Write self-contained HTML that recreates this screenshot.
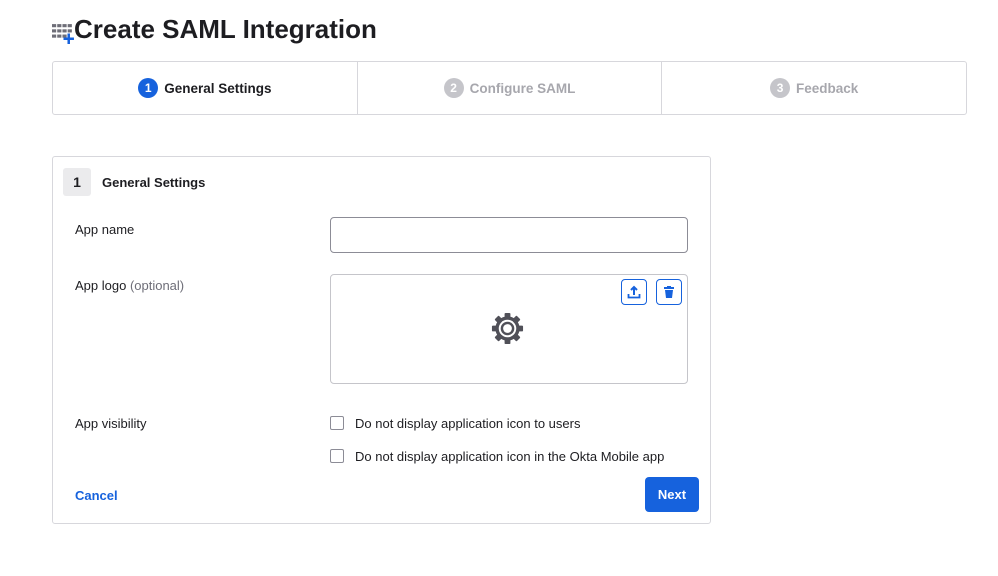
<!DOCTYPE html>
<html><head><meta charset="utf-8"><style>
*{box-sizing:border-box;margin:0;padding:0}
body{width:998px;height:576px;background:#fff;font-family:"Liberation Sans",sans-serif;color:#1d1d21;position:relative;overflow:hidden}
.abs{position:absolute}
h1{position:absolute;left:74px;top:14px;font-size:26px;font-weight:bold;color:#1d1d21;letter-spacing:0}
.steps{left:52px;top:61px;width:915px;height:54px;border:1px solid #d7d7dc;border-radius:3px;display:flex}
.step{flex:1;display:flex;align-items:center;justify-content:center;font-size:13.5px;font-weight:bold;color:#a7a7ad;border-right:1px solid #d7d7dc}
.step:last-child{border-right:none}
.num{width:20px;height:20px;border-radius:50%;background:#c5c5ca;color:#fff;font-size:12px;display:flex;align-items:center;justify-content:center;margin-right:6px}
.step.on{color:#1d1d21}.step.on .num{background:#1662dd}
.card{left:52px;top:156px;width:659px;height:368px;border:1px solid #d7d7dc;border-radius:3px}
.badge{left:63px;top:168px;width:28px;height:28px;background:#ebebed;border-radius:3px;font-size:14px;font-weight:bold;display:flex;align-items:center;justify-content:center}
.lbl{font-size:13px;color:#1d1d21}
.input{border:1px solid #8c8c96;border-radius:4px}
.cb{width:14px;height:14px;border:1px solid #8c8c96;border-radius:2px}
.ib{width:26px;height:26px;border:1px solid #1662dd;border-radius:4px;display:flex;align-items:center;justify-content:center}
</style></head><body>
<svg class="abs" style="left:52px;top:22px" width="23" height="23" viewBox="0 0 22 22">
<g fill="#6e6e78"><rect x="0" y="2" width="4" height="3"/><rect x="5" y="2" width="4" height="3"/><rect x="10" y="2" width="4" height="3"/><rect x="15" y="2" width="4" height="3"/>
<rect x="0" y="7" width="4" height="3"/><rect x="5" y="7" width="4" height="3"/><rect x="10" y="7" width="4" height="3"/><rect x="15" y="7" width="4" height="3"/>
<rect x="0" y="12" width="4" height="3"/><rect x="5" y="12" width="4" height="3"/><rect x="10" y="12" width="4" height="3"/></g>
<path d="M16 11v10M11 16h10" stroke="#1662dd" stroke-width="2.4"/></svg>
<h1>Create SAML Integration</h1>
<div class="abs steps">
<div class="step on"><span class="num">1</span>General Settings</div>
<div class="step"><span class="num">2</span>Configure SAML</div>
<div class="step"><span class="num">3</span>Feedback</div>
</div>
<div class="abs card"></div>
<div class="abs badge">1</div>
<div class="abs" style="left:102px;top:175px;font-size:13px;font-weight:bold">General Settings</div>
<div class="abs lbl" style="left:75px;top:222px">App name</div>
<div class="abs input" style="left:330px;top:217px;width:358px;height:36px"></div>
<div class="abs lbl" style="left:75px;top:278px">App logo <span style="color:#6e6e78">(optional)</span></div>
<div class="abs input" style="left:330px;top:274px;width:358px;height:110px;border-color:#c5c5ca"></div>
<div class="abs ib" style="left:621px;top:279px"><svg width="14" height="14" viewBox="0 0 14 14"><path d="M7 10V2M4 5l3-3 3 3" stroke="#1662dd" stroke-width="2" fill="none"/><path d="M1.5 9v3.5h11V9" stroke="#1662dd" stroke-width="1.8" fill="none"/></svg></div>
<div class="abs ib" style="left:656px;top:279px"><svg width="14" height="14" viewBox="0 0 14 14"><rect x="2" y="2" width="10" height="2" fill="#1662dd"/><rect x="5" y="1" width="4" height="2" fill="#1662dd"/><path d="M3 5h8l-1 8H4z" fill="#1662dd"/></svg></div>
<svg class="abs" style="left:490px;top:311px" width="35" height="35" viewBox="0 0 36 36"><g fill="#505058" transform="translate(18 18)">
<rect x="-3" y="-16" width="6" height="6" rx="1"/><rect x="-3" y="-16" width="6" height="6" rx="1" transform="rotate(45)"/><rect x="-3" y="-16" width="6" height="6" rx="1" transform="rotate(90)"/><rect x="-3" y="-16" width="6" height="6" rx="1" transform="rotate(135)"/><rect x="-3" y="-16" width="6" height="6" rx="1" transform="rotate(180)"/><rect x="-3" y="-16" width="6" height="6" rx="1" transform="rotate(225)"/><rect x="-3" y="-16" width="6" height="6" rx="1" transform="rotate(270)"/><rect x="-3" y="-16" width="6" height="6" rx="1" transform="rotate(315)"/>
<circle r="12.5"/></g><circle cx="18" cy="18" r="9" fill="#fff"/><circle cx="18" cy="18" r="7" fill="#505058"/><circle cx="18" cy="18" r="4.5" fill="#fff"/></svg>
<div class="abs lbl" style="left:75px;top:416px">App visibility</div>
<div class="abs cb" style="left:330px;top:416px"></div>
<div class="abs lbl" style="left:355px;top:416px">Do not display application icon to users</div>
<div class="abs cb" style="left:330px;top:449px"></div>
<div class="abs lbl" style="left:355px;top:449px">Do not display application icon in the Okta Mobile app</div>
<div class="abs" style="left:75px;top:488px;font-size:13px;font-weight:bold;color:#1662dd">Cancel</div>
<div class="abs" style="left:645px;top:477px;width:54px;height:35px;background:#1662dd;border-radius:4px;color:#fff;font-size:13px;font-weight:bold;display:flex;align-items:center;justify-content:center">Next</div>
</body></html>
